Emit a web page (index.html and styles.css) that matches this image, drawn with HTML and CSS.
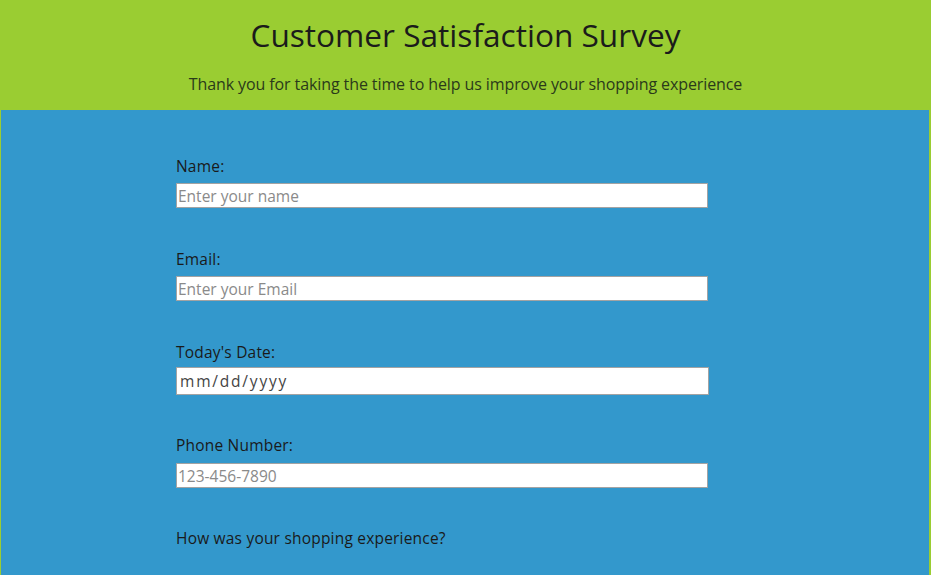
FILE: index.html
```html
<!DOCTYPE html>
<html lang="en">
<head>
<meta charset="utf-8">
<title>Customer Satisfaction Survey</title>
<link rel="stylesheet" href="styles.css">
</head>
<body>
<header class="page-header">
  <h1 class="title">Customer Satisfaction Survey</h1>
  <p class="subtitle">Thank you for taking the time to help us improve your shopping experience</p>
</header>
<main class="survey">
  <form class="survey-form">
    <div class="field">
      <label class="field-label" for="name">Name:</label>
      <input class="field-input" id="name" type="text" placeholder="Enter your name">
    </div>
    <div class="field">
      <label class="field-label" for="email">Email:</label>
      <input class="field-input" id="email" type="email" placeholder="Enter your Email">
    </div>
    <div class="field">
      <label class="field-label" for="date">Today's Date:</label>
      <input class="field-input date-input" id="date" type="text" value="mm/dd/yyyy">
    </div>
    <div class="field field-phone">
      <label class="field-label" for="phone">Phone Number:</label>
      <input class="field-input" id="phone" type="tel" placeholder="123-456-7890">
    </div>
    <div class="field field-last">
      <p class="question">How was your shopping experience?</p>
    </div>
  </form>
</main>
</body>
</html>
```

FILE: styles.css
```css
* { box-sizing: border-box; }
html, body { margin: 0; padding: 0; }
body {
  background: #9acd32;
  font-family: "Open Sans", "Lato", sans-serif;
  color: #1b1b1b;
  height: 575px;
  overflow: hidden;
}
.page-header {
  height: 110px;
  text-align: center;
  padding-top: 14px;
}
.title {
  margin: 0;
  font-size: 31.6px;
  font-weight: 400;
  line-height: 42px;
}
.subtitle {
  margin: 18px 0 0;
  font-size: 16px;
  line-height: 20px;
  letter-spacing: -0.1px;
  color: #2a3a1a;
}
.survey {
  background: #3398cc;
  margin: 0 2px 0 1px;
  height: 465px;
  padding: 46px 0 0 175px;
  overflow: hidden;
}
.survey-form { display: flex; flex-direction: column; }
.field {
  height: 93px;
  display: flex;
  flex-direction: column;
}
.field-phone .field-input { margin-top: 8px; }
.field-last { height: auto; }
.field-label, .question {
  display: block;
  margin: 0;
  font-size: 15.5px;
  line-height: 20px;
  letter-spacing: 0.2px;
  color: #1a1a1a;
}
.field-input {
  margin-top: 7px;
  width: 532px;
  height: 25px;
  border: 1px solid #a3a3a3;
  background: #fff;
  font-family: inherit;
  font-size: 15.5px;
  padding: 0 1px;
  color: #333;
  outline: none;
}
.field-input::placeholder { color: #8a8a8a; }
.date-input {
  margin-top: 5px;
  width: 533px;
  height: 28px;
  padding: 0 3px;
  letter-spacing: 1.8px;
  color: #444;
}
```
